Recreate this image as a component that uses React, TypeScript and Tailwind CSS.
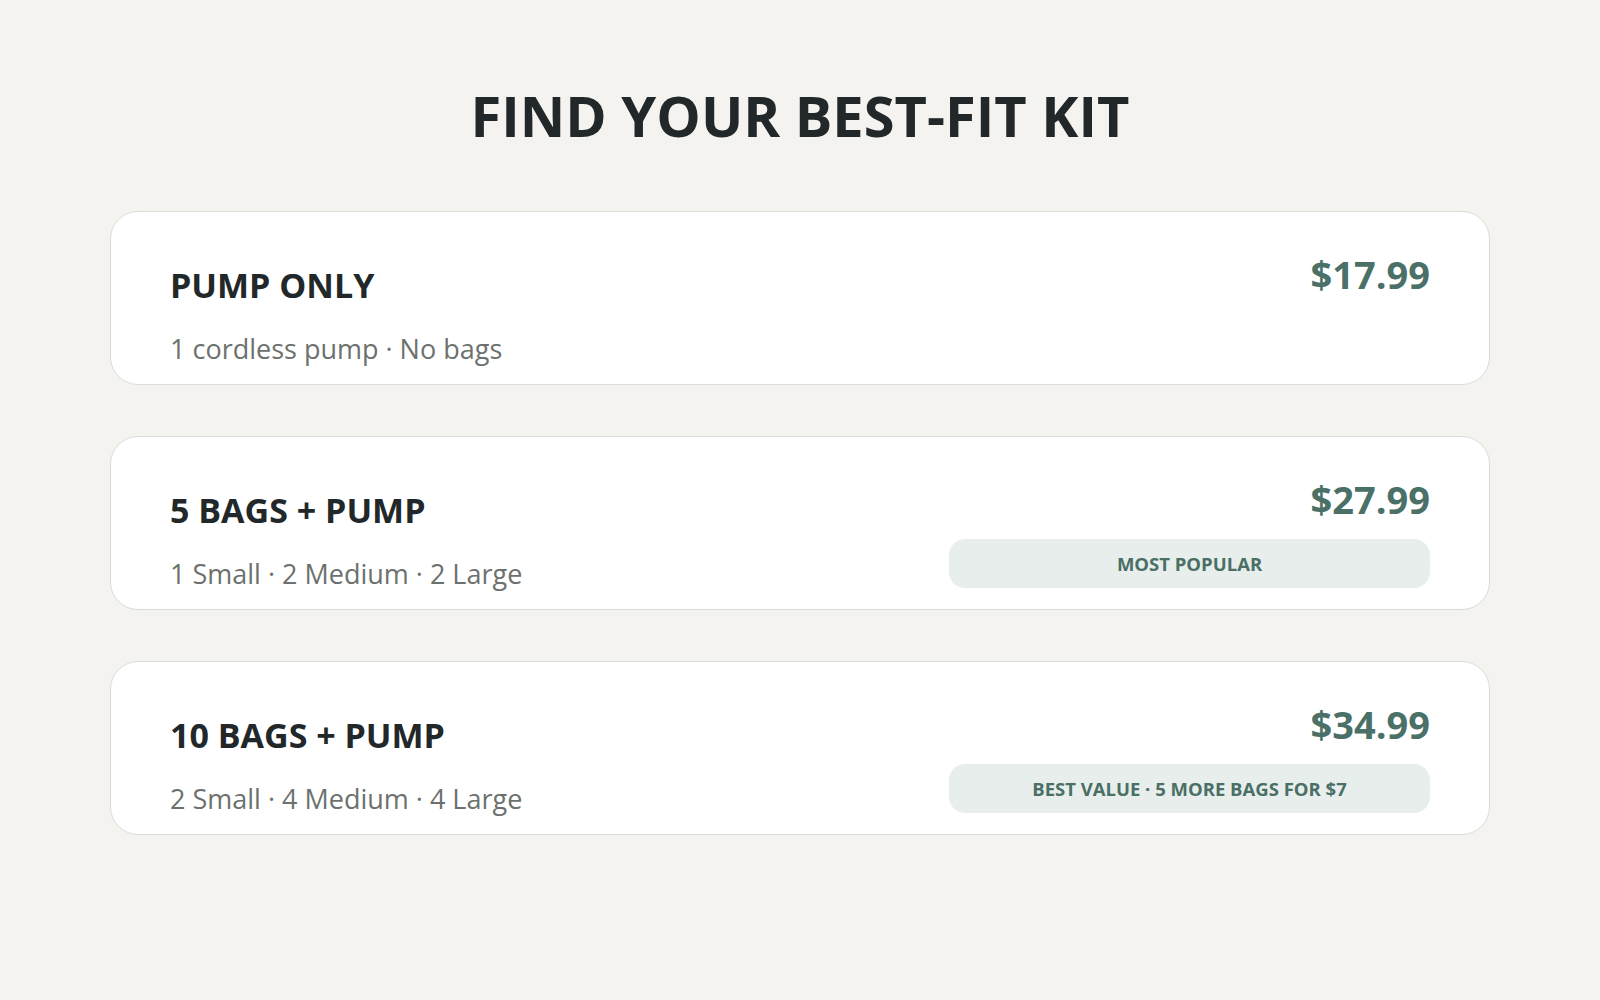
const kits = [
  { name: 'PUMP ONLY', detail: '1 cordless pump · No bags', price: '$17.99', tag: '' },
  { name: '5 BAGS + PUMP', detail: '1 Small · 2 Medium · 2 Large', price: '$27.99', tag: 'MOST POPULAR' },
  { name: '10 BAGS + PUMP', detail: '2 Small · 4 Medium · 4 Large', price: '$34.99', tag: 'BEST VALUE · 5 MORE BAGS FOR $7' },
]

export default function App() {
  return (
    <div className="min-h-screen bg-[#f4f3f0] font-['Open_Sans',sans-serif]">
      <div className="px-[110px] pt-[81px]">
        <h1 className="text-center text-[56px] font-bold leading-[68px] text-[#22272a]">
          FIND YOUR BEST-FIT KIT
        </h1>

        <div className="mt-[62px] flex flex-col gap-[51px]">
          {kits.map((kit) => (
            <div
              key={kit.name}
              className="flex h-[174px] items-start justify-between rounded-[28px] border-[1.5px] border-[#d9dcd8] bg-white px-[59px] pt-[36px]"
            >
              <div className="mt-[17px]">
                <h3 className="text-[34px] font-bold leading-[1.2] text-[#22272a]">{kit.name}</h3>
                <p className="mt-[27px] text-[27px] leading-[1.2] text-[#6c716e]">{kit.detail}</p>
              </div>
              <div className="flex flex-col items-end">
                <div className="mt-[3px] text-[38px] font-bold leading-[46px] text-[#4a7068]">{kit.price}</div>
                {kit.tag && (
                  <div className="mt-[17px] flex h-[49px] w-[481px] items-center justify-center rounded-[16px] bg-[#e8eeeb] text-[18.5px] font-bold text-[#4a6f66]">
                    {kit.tag}
                  </div>
                )}
              </div>
            </div>
          ))}
        </div>
      </div>
    </div>
  )
}
